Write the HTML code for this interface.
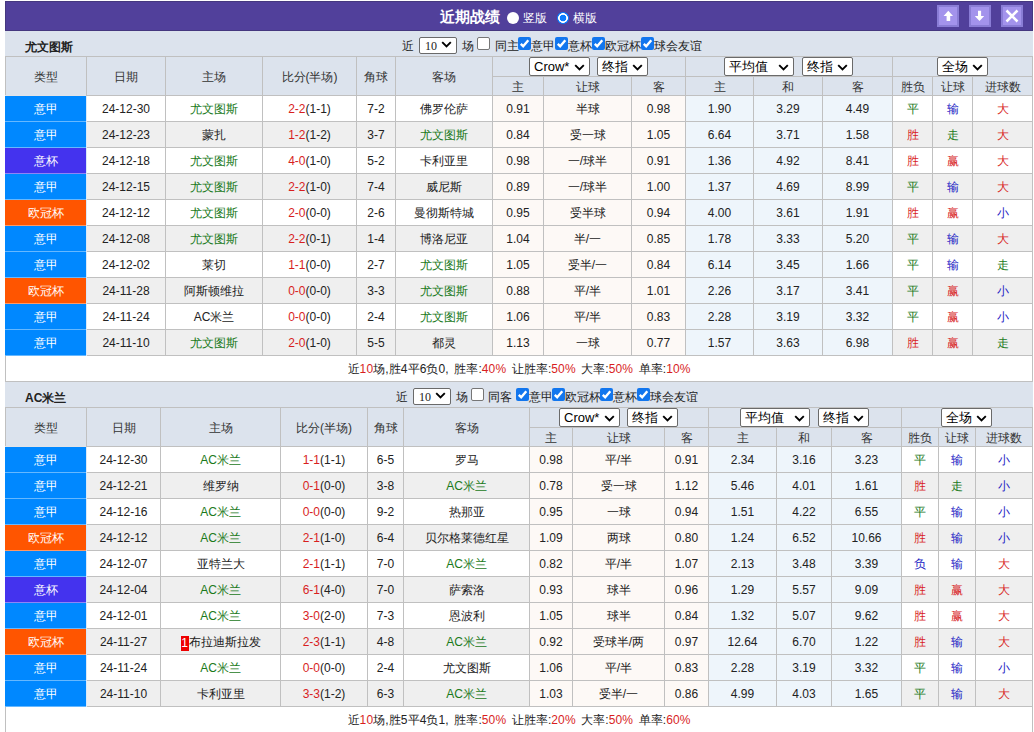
<!DOCTYPE html><html><head><meta charset="utf-8"><style>
*{margin:0;padding:0;box-sizing:content-box}
html,body{width:1034px;height:732px;overflow:hidden;background:#fff}
body{position:relative;font-family:"Liberation Sans",sans-serif;font-size:12px;color:#222}
.a{position:absolute}
.t{position:absolute;white-space:nowrap;font-size:12px;color:#222}
.b{font-weight:bold}
.c{position:absolute;text-align:center;white-space:nowrap;overflow:hidden;font-size:12px;color:#222}
.w{color:#fff}
.sel{position:absolute;background:#fff;border:1px solid #6a6a6a;border-radius:2px;box-sizing:content-box}
.st{position:absolute;left:4px;top:0;line-height:17px;font-size:13px;color:#000}
.cb{position:absolute;width:11px;height:11px;border:1px solid #767676;border-radius:2px;background:#fff}
.cb.on{width:13px;height:13px;border:0;background:#1276ee}
.cb svg{position:absolute;left:0;top:0}
.rk{display:inline-block;background:#e00;color:#fff;width:8px;line-height:15px;font-size:12px;vertical-align:-1px}
</style></head><body><div class="a" style="left:5px;top:1px;width:1026px;height:28px;background:#51409b;border:1px solid #45387f"></div><div class="t b" style="left:440px;top:2px;height:30px;line-height:30px;font-size:15px;color:#fff">近期战绩</div><div class="a" style="left:506.5px;top:11.5px;width:12px;height:12px;border-radius:50%;background:#fff"></div><div class="t" style="left:523px;top:3px;line-height:30px;color:#fff">竖版</div><div class="a" style="left:556.5px;top:11.5px;width:12px;height:12px;border-radius:50%;background:radial-gradient(circle,#0a7dff 0,#0a7dff 3.1px,#fff 3.6px,#fff 4.6px,#0a7dff 5.1px)"></div><div class="t" style="left:573px;top:3px;line-height:30px;color:#fff">横版</div><div class="a" style="left:937px;top:5px;width:18px;height:18px;background:#a393ec;border:2px solid #8a7dd6"><svg width="18" height="18" viewBox="0 0 18 18"><path d="M9.3 3.8 L14 9 L11.2 9 L11.2 14 L7.6 14 L7.6 9 L4.6 9 Z" fill="#fff"/></svg></div><div class="a" style="left:969px;top:5px;width:18px;height:18px;background:#a393ec;border:2px solid #8a7dd6"><svg width="18" height="18" viewBox="0 0 18 18"><path d="M8.5 14 L13.2 9 L10.1 9 L10.1 3.8 L7 3.8 L7 9 L3.8 9 Z" fill="#fff"/></svg></div><div class="a" style="left:1001px;top:5px;width:18px;height:18px;background:#a393ec;border:2px solid #8a7dd6"><svg width="18" height="18" viewBox="0 0 18 18"><path d="M3.5 3.5 L14.5 14.5 M14.5 3.5 L3.5 14.5" stroke="#fff" stroke-width="2.5" fill="none"/></svg></div><div class="a" style="left:5px;top:31px;width:1028px;height:25px;background:#dce3ed;"></div><div class="t b" style="left:25px;top:35px;height:25px;line-height:25px">尤文图斯</div><div class="t" style="left:402px;top:34px;line-height:25px">近</div><div class="sel" style="left:419px;top:37px;width:36px;height:15px"><span style="font-family:'Liberation Serif',serif;font-size:12px;left:5px;top:1px;line-height:15px;position:absolute">10</span><svg style="position:absolute;left:21px;top:3px" width="11" height="7" viewBox="0 0 11 7"><path d="M1.2 1.2 L5.5 5.5 L9.8 1.2" fill="none" stroke="#000" stroke-width="1.9"/></svg></div><div class="t" style="left:462px;top:34px;line-height:25px">场</div><div class="cb" style="left:477px;top:37px"></div><div class="t" style="left:495px;top:34px;line-height:25px">同主</div><div class="cb on" style="left:518px;top:37px"><svg width="13" height="13" viewBox="0 0 13 13"><path d="M2.8 6.8 L5.2 9.3 L10.3 3.3" fill="none" stroke="#fff" stroke-width="2.4" stroke-linecap="butt" stroke-linejoin="miter"/></svg></div><div class="t" style="left:531px;top:34px;line-height:25px">意甲</div><div class="cb on" style="left:555px;top:37px"><svg width="13" height="13" viewBox="0 0 13 13"><path d="M2.8 6.8 L5.2 9.3 L10.3 3.3" fill="none" stroke="#fff" stroke-width="2.4" stroke-linecap="butt" stroke-linejoin="miter"/></svg></div><div class="t" style="left:568px;top:34px;line-height:25px">意杯</div><div class="cb on" style="left:592px;top:37px"><svg width="13" height="13" viewBox="0 0 13 13"><path d="M2.8 6.8 L5.2 9.3 L10.3 3.3" fill="none" stroke="#fff" stroke-width="2.4" stroke-linecap="butt" stroke-linejoin="miter"/></svg></div><div class="t" style="left:605px;top:34px;line-height:25px">欧冠杯</div><div class="cb on" style="left:641px;top:37px"><svg width="13" height="13" viewBox="0 0 13 13"><path d="M2.8 6.8 L5.2 9.3 L10.3 3.3" fill="none" stroke="#fff" stroke-width="2.4" stroke-linecap="butt" stroke-linejoin="miter"/></svg></div><div class="t" style="left:654px;top:34px;line-height:25px">球会友谊</div><div class="a" style="left:5px;top:56px;width:1028px;height:326px;background:#c0c0c0;"></div><div class="c" style="left:6px;top:57px;width:80px;height:37px;padding-top:1px;line-height:38px;background:#dce3ed;color:#333;">类型</div><div class="c" style="left:87px;top:57px;width:78px;height:37px;padding-top:1px;line-height:38px;background:#dce3ed;color:#333;">日期</div><div class="c" style="left:166px;top:57px;width:96px;height:37px;padding-top:1px;line-height:38px;background:#dce3ed;color:#333;">主场</div><div class="c" style="left:263px;top:57px;width:93px;height:37px;padding-top:1px;line-height:38px;background:#dce3ed;color:#333;">比分(半场)</div><div class="c" style="left:357px;top:57px;width:38px;height:37px;padding-top:1px;line-height:38px;background:#dce3ed;color:#333;">角球</div><div class="c" style="left:396px;top:57px;width:96px;height:37px;padding-top:1px;line-height:38px;background:#dce3ed;color:#333;">客场</div><div class="c" style="left:493px;top:57px;width:192px;height:18px;padding-top:1px;line-height:19px;background:#dce3ed;"></div><div class="c" style="left:686px;top:57px;width:206px;height:18px;padding-top:1px;line-height:19px;background:#dce3ed;"></div><div class="c" style="left:893px;top:57px;width:139px;height:18px;padding-top:1px;line-height:19px;background:#dce3ed;"></div><div class="c" style="left:493px;top:77px;width:50px;height:17px;padding-top:1px;line-height:18px;background:#dce3ed;color:#333;">主</div><div class="c" style="left:544px;top:77px;width:87px;height:17px;padding-top:1px;line-height:18px;background:#dce3ed;color:#333;">让球</div><div class="c" style="left:632px;top:77px;width:53px;height:17px;padding-top:1px;line-height:18px;background:#dce3ed;color:#333;">客</div><div class="c" style="left:686px;top:77px;width:67px;height:17px;padding-top:1px;line-height:18px;background:#dce3ed;color:#333;">主</div><div class="c" style="left:754px;top:77px;width:68px;height:17px;padding-top:1px;line-height:18px;background:#dce3ed;color:#333;">和</div><div class="c" style="left:823px;top:77px;width:69px;height:17px;padding-top:1px;line-height:18px;background:#dce3ed;color:#333;">客</div><div class="c" style="left:893px;top:77px;width:39px;height:17px;padding-top:1px;line-height:18px;background:#dce3ed;color:#333;">胜负</div><div class="c" style="left:933px;top:77px;width:39px;height:17px;padding-top:1px;line-height:18px;background:#dce3ed;color:#333;">让球</div><div class="c" style="left:973px;top:77px;width:59px;height:17px;padding-top:1px;line-height:18px;background:#dce3ed;color:#333;">进球数</div><div class="sel" style="left:529px;top:57px;width:59px;height:17px"><span class="st">Crow*</span><svg style="position:absolute;left:44px;top:6px" width="11" height="7" viewBox="0 0 11 7"><path d="M1.2 1.2 L5.5 5.5 L9.8 1.2" fill="none" stroke="#000" stroke-width="1.9"/></svg></div><div class="sel" style="left:597px;top:57px;width:49px;height:17px"><span class="st">终指</span><svg style="position:absolute;left:34px;top:6px" width="11" height="7" viewBox="0 0 11 7"><path d="M1.2 1.2 L5.5 5.5 L9.8 1.2" fill="none" stroke="#000" stroke-width="1.9"/></svg></div><div class="sel" style="left:724px;top:57px;width:68px;height:17px"><span class="st">平均值</span><svg style="position:absolute;left:53px;top:6px" width="11" height="7" viewBox="0 0 11 7"><path d="M1.2 1.2 L5.5 5.5 L9.8 1.2" fill="none" stroke="#000" stroke-width="1.9"/></svg></div><div class="sel" style="left:802px;top:57px;width:49px;height:17px"><span class="st">终指</span><svg style="position:absolute;left:34px;top:6px" width="11" height="7" viewBox="0 0 11 7"><path d="M1.2 1.2 L5.5 5.5 L9.8 1.2" fill="none" stroke="#000" stroke-width="1.9"/></svg></div><div class="sel" style="left:937px;top:57px;width:49px;height:17px"><span class="st">全场</span><svg style="position:absolute;left:34px;top:6px" width="11" height="7" viewBox="0 0 11 7"><path d="M1.2 1.2 L5.5 5.5 L9.8 1.2" fill="none" stroke="#000" stroke-width="1.9"/></svg></div><div class="c w" style="left:5px;top:96px;width:81px;height:24px;padding-top:1px;line-height:25px;background:#0088ff">意甲</div><div class="a" style="left:5px;top:121px;width:81px;height:1px;background:#66b8ff;"></div><div class="a" style="left:86px;top:96px;width:1px;height:26px;background:#d9e9f9;"></div><div class="a" style="left:5px;top:95px;width:81px;height:1px;background:#e2e4e8;"></div><div class="c" style="left:87px;top:96px;width:78px;height:24px;padding-top:1px;line-height:25px;background:#ffffff;">24-12-30</div><div class="c" style="left:166px;top:96px;width:96px;height:24px;padding-top:1px;line-height:25px;background:#ffffff;"><span style="color:#1a7a1a">尤文图斯</span></div><div class="c" style="left:263px;top:96px;width:93px;height:24px;padding-top:1px;line-height:25px;background:#ffffff;"><span style="color:#d81e1e">2-2</span>(1-1)</div><div class="c" style="left:357px;top:96px;width:38px;height:24px;padding-top:1px;line-height:25px;background:#ffffff;">7-2</div><div class="c" style="left:396px;top:96px;width:96px;height:24px;padding-top:1px;line-height:25px;background:#ffffff;">佛罗伦萨</div><div class="c" style="left:493px;top:96px;width:50px;height:24px;padding-top:1px;line-height:25px;background:#fdf9f6;">0.91</div><div class="c" style="left:544px;top:96px;width:87px;height:24px;padding-top:1px;line-height:25px;background:#fdf9f6;">半球</div><div class="c" style="left:632px;top:96px;width:53px;height:24px;padding-top:1px;line-height:25px;background:#fdf9f6;">0.98</div><div class="c" style="left:686px;top:96px;width:67px;height:24px;padding-top:1px;line-height:25px;background:#eef5fb;">1.90</div><div class="c" style="left:754px;top:96px;width:68px;height:24px;padding-top:1px;line-height:25px;background:#eef5fb;">3.29</div><div class="c" style="left:823px;top:96px;width:69px;height:24px;padding-top:1px;line-height:25px;background:#eef5fb;">4.49</div><div class="c" style="left:893px;top:96px;width:39px;height:24px;padding-top:1px;line-height:25px;background:#ffffff;color:#1a7a1a;">平</div><div class="c" style="left:933px;top:96px;width:39px;height:24px;padding-top:1px;line-height:25px;background:#ffffff;color:#2222c4;">输</div><div class="c" style="left:973px;top:96px;width:59px;height:24px;padding-top:1px;line-height:25px;background:#ffffff;color:#d81e1e;">大</div><div class="c w" style="left:5px;top:122px;width:81px;height:24px;padding-top:1px;line-height:25px;background:#0088ff">意甲</div><div class="a" style="left:5px;top:147px;width:81px;height:1px;background:#66b8ff;"></div><div class="a" style="left:86px;top:122px;width:1px;height:26px;background:#d9e9f9;"></div><div class="c" style="left:87px;top:122px;width:78px;height:24px;padding-top:1px;line-height:25px;background:#efefef;">24-12-23</div><div class="c" style="left:166px;top:122px;width:96px;height:24px;padding-top:1px;line-height:25px;background:#efefef;">蒙扎</div><div class="c" style="left:263px;top:122px;width:93px;height:24px;padding-top:1px;line-height:25px;background:#efefef;"><span style="color:#d81e1e">1-2</span>(1-2)</div><div class="c" style="left:357px;top:122px;width:38px;height:24px;padding-top:1px;line-height:25px;background:#efefef;">3-7</div><div class="c" style="left:396px;top:122px;width:96px;height:24px;padding-top:1px;line-height:25px;background:#efefef;"><span style="color:#1a7a1a">尤文图斯</span></div><div class="c" style="left:493px;top:122px;width:50px;height:24px;padding-top:1px;line-height:25px;background:#fdf9f6;">0.84</div><div class="c" style="left:544px;top:122px;width:87px;height:24px;padding-top:1px;line-height:25px;background:#fdf9f6;">受一球</div><div class="c" style="left:632px;top:122px;width:53px;height:24px;padding-top:1px;line-height:25px;background:#fdf9f6;">1.05</div><div class="c" style="left:686px;top:122px;width:67px;height:24px;padding-top:1px;line-height:25px;background:#eef5fb;">6.64</div><div class="c" style="left:754px;top:122px;width:68px;height:24px;padding-top:1px;line-height:25px;background:#eef5fb;">3.71</div><div class="c" style="left:823px;top:122px;width:69px;height:24px;padding-top:1px;line-height:25px;background:#eef5fb;">1.58</div><div class="c" style="left:893px;top:122px;width:39px;height:24px;padding-top:1px;line-height:25px;background:#efefef;color:#d81e1e;">胜</div><div class="c" style="left:933px;top:122px;width:39px;height:24px;padding-top:1px;line-height:25px;background:#efefef;color:#1a7a1a;">走</div><div class="c" style="left:973px;top:122px;width:59px;height:24px;padding-top:1px;line-height:25px;background:#efefef;color:#d81e1e;">大</div><div class="c w" style="left:5px;top:148px;width:81px;height:24px;padding-top:1px;line-height:25px;background:#4433ee">意杯</div><div class="a" style="left:5px;top:173px;width:81px;height:1px;background:#8f85f5;"></div><div class="a" style="left:86px;top:148px;width:1px;height:26px;background:#d9e9f9;"></div><div class="c" style="left:87px;top:148px;width:78px;height:24px;padding-top:1px;line-height:25px;background:#ffffff;">24-12-18</div><div class="c" style="left:166px;top:148px;width:96px;height:24px;padding-top:1px;line-height:25px;background:#ffffff;"><span style="color:#1a7a1a">尤文图斯</span></div><div class="c" style="left:263px;top:148px;width:93px;height:24px;padding-top:1px;line-height:25px;background:#ffffff;"><span style="color:#d81e1e">4-0</span>(1-0)</div><div class="c" style="left:357px;top:148px;width:38px;height:24px;padding-top:1px;line-height:25px;background:#ffffff;">5-2</div><div class="c" style="left:396px;top:148px;width:96px;height:24px;padding-top:1px;line-height:25px;background:#ffffff;">卡利亚里</div><div class="c" style="left:493px;top:148px;width:50px;height:24px;padding-top:1px;line-height:25px;background:#fdf9f6;">0.98</div><div class="c" style="left:544px;top:148px;width:87px;height:24px;padding-top:1px;line-height:25px;background:#fdf9f6;">一/球半</div><div class="c" style="left:632px;top:148px;width:53px;height:24px;padding-top:1px;line-height:25px;background:#fdf9f6;">0.91</div><div class="c" style="left:686px;top:148px;width:67px;height:24px;padding-top:1px;line-height:25px;background:#eef5fb;">1.36</div><div class="c" style="left:754px;top:148px;width:68px;height:24px;padding-top:1px;line-height:25px;background:#eef5fb;">4.92</div><div class="c" style="left:823px;top:148px;width:69px;height:24px;padding-top:1px;line-height:25px;background:#eef5fb;">8.41</div><div class="c" style="left:893px;top:148px;width:39px;height:24px;padding-top:1px;line-height:25px;background:#ffffff;color:#d81e1e;">胜</div><div class="c" style="left:933px;top:148px;width:39px;height:24px;padding-top:1px;line-height:25px;background:#ffffff;color:#d81e1e;">赢</div><div class="c" style="left:973px;top:148px;width:59px;height:24px;padding-top:1px;line-height:25px;background:#ffffff;color:#d81e1e;">大</div><div class="c w" style="left:5px;top:174px;width:81px;height:24px;padding-top:1px;line-height:25px;background:#0088ff">意甲</div><div class="a" style="left:5px;top:199px;width:81px;height:1px;background:#66b8ff;"></div><div class="a" style="left:86px;top:174px;width:1px;height:26px;background:#d9e9f9;"></div><div class="c" style="left:87px;top:174px;width:78px;height:24px;padding-top:1px;line-height:25px;background:#efefef;">24-12-15</div><div class="c" style="left:166px;top:174px;width:96px;height:24px;padding-top:1px;line-height:25px;background:#efefef;"><span style="color:#1a7a1a">尤文图斯</span></div><div class="c" style="left:263px;top:174px;width:93px;height:24px;padding-top:1px;line-height:25px;background:#efefef;"><span style="color:#d81e1e">2-2</span>(1-0)</div><div class="c" style="left:357px;top:174px;width:38px;height:24px;padding-top:1px;line-height:25px;background:#efefef;">7-4</div><div class="c" style="left:396px;top:174px;width:96px;height:24px;padding-top:1px;line-height:25px;background:#efefef;">威尼斯</div><div class="c" style="left:493px;top:174px;width:50px;height:24px;padding-top:1px;line-height:25px;background:#fdf9f6;">0.89</div><div class="c" style="left:544px;top:174px;width:87px;height:24px;padding-top:1px;line-height:25px;background:#fdf9f6;">一/球半</div><div class="c" style="left:632px;top:174px;width:53px;height:24px;padding-top:1px;line-height:25px;background:#fdf9f6;">1.00</div><div class="c" style="left:686px;top:174px;width:67px;height:24px;padding-top:1px;line-height:25px;background:#eef5fb;">1.37</div><div class="c" style="left:754px;top:174px;width:68px;height:24px;padding-top:1px;line-height:25px;background:#eef5fb;">4.69</div><div class="c" style="left:823px;top:174px;width:69px;height:24px;padding-top:1px;line-height:25px;background:#eef5fb;">8.99</div><div class="c" style="left:893px;top:174px;width:39px;height:24px;padding-top:1px;line-height:25px;background:#efefef;color:#1a7a1a;">平</div><div class="c" style="left:933px;top:174px;width:39px;height:24px;padding-top:1px;line-height:25px;background:#efefef;color:#2222c4;">输</div><div class="c" style="left:973px;top:174px;width:59px;height:24px;padding-top:1px;line-height:25px;background:#efefef;color:#d81e1e;">大</div><div class="c w" style="left:5px;top:200px;width:81px;height:24px;padding-top:1px;line-height:25px;background:#ff5500">欧冠杯</div><div class="a" style="left:5px;top:225px;width:81px;height:1px;background:#ff9966;"></div><div class="a" style="left:86px;top:200px;width:1px;height:26px;background:#d9e9f9;"></div><div class="c" style="left:87px;top:200px;width:78px;height:24px;padding-top:1px;line-height:25px;background:#ffffff;">24-12-12</div><div class="c" style="left:166px;top:200px;width:96px;height:24px;padding-top:1px;line-height:25px;background:#ffffff;"><span style="color:#1a7a1a">尤文图斯</span></div><div class="c" style="left:263px;top:200px;width:93px;height:24px;padding-top:1px;line-height:25px;background:#ffffff;"><span style="color:#d81e1e">2-0</span>(0-0)</div><div class="c" style="left:357px;top:200px;width:38px;height:24px;padding-top:1px;line-height:25px;background:#ffffff;">2-6</div><div class="c" style="left:396px;top:200px;width:96px;height:24px;padding-top:1px;line-height:25px;background:#ffffff;">曼彻斯特城</div><div class="c" style="left:493px;top:200px;width:50px;height:24px;padding-top:1px;line-height:25px;background:#fdf9f6;">0.95</div><div class="c" style="left:544px;top:200px;width:87px;height:24px;padding-top:1px;line-height:25px;background:#fdf9f6;">受半球</div><div class="c" style="left:632px;top:200px;width:53px;height:24px;padding-top:1px;line-height:25px;background:#fdf9f6;">0.94</div><div class="c" style="left:686px;top:200px;width:67px;height:24px;padding-top:1px;line-height:25px;background:#eef5fb;">4.00</div><div class="c" style="left:754px;top:200px;width:68px;height:24px;padding-top:1px;line-height:25px;background:#eef5fb;">3.61</div><div class="c" style="left:823px;top:200px;width:69px;height:24px;padding-top:1px;line-height:25px;background:#eef5fb;">1.91</div><div class="c" style="left:893px;top:200px;width:39px;height:24px;padding-top:1px;line-height:25px;background:#ffffff;color:#d81e1e;">胜</div><div class="c" style="left:933px;top:200px;width:39px;height:24px;padding-top:1px;line-height:25px;background:#ffffff;color:#d81e1e;">赢</div><div class="c" style="left:973px;top:200px;width:59px;height:24px;padding-top:1px;line-height:25px;background:#ffffff;color:#2222c4;">小</div><div class="c w" style="left:5px;top:226px;width:81px;height:24px;padding-top:1px;line-height:25px;background:#0088ff">意甲</div><div class="a" style="left:5px;top:251px;width:81px;height:1px;background:#66b8ff;"></div><div class="a" style="left:86px;top:226px;width:1px;height:26px;background:#d9e9f9;"></div><div class="c" style="left:87px;top:226px;width:78px;height:24px;padding-top:1px;line-height:25px;background:#efefef;">24-12-08</div><div class="c" style="left:166px;top:226px;width:96px;height:24px;padding-top:1px;line-height:25px;background:#efefef;"><span style="color:#1a7a1a">尤文图斯</span></div><div class="c" style="left:263px;top:226px;width:93px;height:24px;padding-top:1px;line-height:25px;background:#efefef;"><span style="color:#d81e1e">2-2</span>(0-1)</div><div class="c" style="left:357px;top:226px;width:38px;height:24px;padding-top:1px;line-height:25px;background:#efefef;">1-4</div><div class="c" style="left:396px;top:226px;width:96px;height:24px;padding-top:1px;line-height:25px;background:#efefef;">博洛尼亚</div><div class="c" style="left:493px;top:226px;width:50px;height:24px;padding-top:1px;line-height:25px;background:#fdf9f6;">1.04</div><div class="c" style="left:544px;top:226px;width:87px;height:24px;padding-top:1px;line-height:25px;background:#fdf9f6;">半/一</div><div class="c" style="left:632px;top:226px;width:53px;height:24px;padding-top:1px;line-height:25px;background:#fdf9f6;">0.85</div><div class="c" style="left:686px;top:226px;width:67px;height:24px;padding-top:1px;line-height:25px;background:#eef5fb;">1.78</div><div class="c" style="left:754px;top:226px;width:68px;height:24px;padding-top:1px;line-height:25px;background:#eef5fb;">3.33</div><div class="c" style="left:823px;top:226px;width:69px;height:24px;padding-top:1px;line-height:25px;background:#eef5fb;">5.20</div><div class="c" style="left:893px;top:226px;width:39px;height:24px;padding-top:1px;line-height:25px;background:#efefef;color:#1a7a1a;">平</div><div class="c" style="left:933px;top:226px;width:39px;height:24px;padding-top:1px;line-height:25px;background:#efefef;color:#2222c4;">输</div><div class="c" style="left:973px;top:226px;width:59px;height:24px;padding-top:1px;line-height:25px;background:#efefef;color:#d81e1e;">大</div><div class="c w" style="left:5px;top:252px;width:81px;height:24px;padding-top:1px;line-height:25px;background:#0088ff">意甲</div><div class="a" style="left:5px;top:277px;width:81px;height:1px;background:#66b8ff;"></div><div class="a" style="left:86px;top:252px;width:1px;height:26px;background:#d9e9f9;"></div><div class="c" style="left:87px;top:252px;width:78px;height:24px;padding-top:1px;line-height:25px;background:#ffffff;">24-12-02</div><div class="c" style="left:166px;top:252px;width:96px;height:24px;padding-top:1px;line-height:25px;background:#ffffff;">莱切</div><div class="c" style="left:263px;top:252px;width:93px;height:24px;padding-top:1px;line-height:25px;background:#ffffff;"><span style="color:#d81e1e">1-1</span>(0-0)</div><div class="c" style="left:357px;top:252px;width:38px;height:24px;padding-top:1px;line-height:25px;background:#ffffff;">2-7</div><div class="c" style="left:396px;top:252px;width:96px;height:24px;padding-top:1px;line-height:25px;background:#ffffff;"><span style="color:#1a7a1a">尤文图斯</span></div><div class="c" style="left:493px;top:252px;width:50px;height:24px;padding-top:1px;line-height:25px;background:#fdf9f6;">1.05</div><div class="c" style="left:544px;top:252px;width:87px;height:24px;padding-top:1px;line-height:25px;background:#fdf9f6;">受半/一</div><div class="c" style="left:632px;top:252px;width:53px;height:24px;padding-top:1px;line-height:25px;background:#fdf9f6;">0.84</div><div class="c" style="left:686px;top:252px;width:67px;height:24px;padding-top:1px;line-height:25px;background:#eef5fb;">6.14</div><div class="c" style="left:754px;top:252px;width:68px;height:24px;padding-top:1px;line-height:25px;background:#eef5fb;">3.45</div><div class="c" style="left:823px;top:252px;width:69px;height:24px;padding-top:1px;line-height:25px;background:#eef5fb;">1.66</div><div class="c" style="left:893px;top:252px;width:39px;height:24px;padding-top:1px;line-height:25px;background:#ffffff;color:#1a7a1a;">平</div><div class="c" style="left:933px;top:252px;width:39px;height:24px;padding-top:1px;line-height:25px;background:#ffffff;color:#2222c4;">输</div><div class="c" style="left:973px;top:252px;width:59px;height:24px;padding-top:1px;line-height:25px;background:#ffffff;color:#1a7a1a;">走</div><div class="c w" style="left:5px;top:278px;width:81px;height:24px;padding-top:1px;line-height:25px;background:#ff5500">欧冠杯</div><div class="a" style="left:5px;top:303px;width:81px;height:1px;background:#ff9966;"></div><div class="a" style="left:86px;top:278px;width:1px;height:26px;background:#d9e9f9;"></div><div class="c" style="left:87px;top:278px;width:78px;height:24px;padding-top:1px;line-height:25px;background:#efefef;">24-11-28</div><div class="c" style="left:166px;top:278px;width:96px;height:24px;padding-top:1px;line-height:25px;background:#efefef;">阿斯顿维拉</div><div class="c" style="left:263px;top:278px;width:93px;height:24px;padding-top:1px;line-height:25px;background:#efefef;"><span style="color:#d81e1e">0-0</span>(0-0)</div><div class="c" style="left:357px;top:278px;width:38px;height:24px;padding-top:1px;line-height:25px;background:#efefef;">3-3</div><div class="c" style="left:396px;top:278px;width:96px;height:24px;padding-top:1px;line-height:25px;background:#efefef;"><span style="color:#1a7a1a">尤文图斯</span></div><div class="c" style="left:493px;top:278px;width:50px;height:24px;padding-top:1px;line-height:25px;background:#fdf9f6;">0.88</div><div class="c" style="left:544px;top:278px;width:87px;height:24px;padding-top:1px;line-height:25px;background:#fdf9f6;">平/半</div><div class="c" style="left:632px;top:278px;width:53px;height:24px;padding-top:1px;line-height:25px;background:#fdf9f6;">1.01</div><div class="c" style="left:686px;top:278px;width:67px;height:24px;padding-top:1px;line-height:25px;background:#eef5fb;">2.26</div><div class="c" style="left:754px;top:278px;width:68px;height:24px;padding-top:1px;line-height:25px;background:#eef5fb;">3.17</div><div class="c" style="left:823px;top:278px;width:69px;height:24px;padding-top:1px;line-height:25px;background:#eef5fb;">3.41</div><div class="c" style="left:893px;top:278px;width:39px;height:24px;padding-top:1px;line-height:25px;background:#efefef;color:#1a7a1a;">平</div><div class="c" style="left:933px;top:278px;width:39px;height:24px;padding-top:1px;line-height:25px;background:#efefef;color:#d81e1e;">赢</div><div class="c" style="left:973px;top:278px;width:59px;height:24px;padding-top:1px;line-height:25px;background:#efefef;color:#2222c4;">小</div><div class="c w" style="left:5px;top:304px;width:81px;height:24px;padding-top:1px;line-height:25px;background:#0088ff">意甲</div><div class="a" style="left:5px;top:329px;width:81px;height:1px;background:#66b8ff;"></div><div class="a" style="left:86px;top:304px;width:1px;height:26px;background:#d9e9f9;"></div><div class="c" style="left:87px;top:304px;width:78px;height:24px;padding-top:1px;line-height:25px;background:#ffffff;">24-11-24</div><div class="c" style="left:166px;top:304px;width:96px;height:24px;padding-top:1px;line-height:25px;background:#ffffff;">AC米兰</div><div class="c" style="left:263px;top:304px;width:93px;height:24px;padding-top:1px;line-height:25px;background:#ffffff;"><span style="color:#d81e1e">0-0</span>(0-0)</div><div class="c" style="left:357px;top:304px;width:38px;height:24px;padding-top:1px;line-height:25px;background:#ffffff;">2-4</div><div class="c" style="left:396px;top:304px;width:96px;height:24px;padding-top:1px;line-height:25px;background:#ffffff;"><span style="color:#1a7a1a">尤文图斯</span></div><div class="c" style="left:493px;top:304px;width:50px;height:24px;padding-top:1px;line-height:25px;background:#fdf9f6;">1.06</div><div class="c" style="left:544px;top:304px;width:87px;height:24px;padding-top:1px;line-height:25px;background:#fdf9f6;">平/半</div><div class="c" style="left:632px;top:304px;width:53px;height:24px;padding-top:1px;line-height:25px;background:#fdf9f6;">0.83</div><div class="c" style="left:686px;top:304px;width:67px;height:24px;padding-top:1px;line-height:25px;background:#eef5fb;">2.28</div><div class="c" style="left:754px;top:304px;width:68px;height:24px;padding-top:1px;line-height:25px;background:#eef5fb;">3.19</div><div class="c" style="left:823px;top:304px;width:69px;height:24px;padding-top:1px;line-height:25px;background:#eef5fb;">3.32</div><div class="c" style="left:893px;top:304px;width:39px;height:24px;padding-top:1px;line-height:25px;background:#ffffff;color:#1a7a1a;">平</div><div class="c" style="left:933px;top:304px;width:39px;height:24px;padding-top:1px;line-height:25px;background:#ffffff;color:#d81e1e;">赢</div><div class="c" style="left:973px;top:304px;width:59px;height:24px;padding-top:1px;line-height:25px;background:#ffffff;color:#2222c4;">小</div><div class="c w" style="left:5px;top:330px;width:81px;height:24px;padding-top:1px;line-height:25px;background:#0088ff">意甲</div><div class="a" style="left:5px;top:355px;width:81px;height:1px;background:#66b8ff;"></div><div class="a" style="left:86px;top:330px;width:1px;height:26px;background:#d9e9f9;"></div><div class="c" style="left:87px;top:330px;width:78px;height:24px;padding-top:1px;line-height:25px;background:#efefef;">24-11-10</div><div class="c" style="left:166px;top:330px;width:96px;height:24px;padding-top:1px;line-height:25px;background:#efefef;"><span style="color:#1a7a1a">尤文图斯</span></div><div class="c" style="left:263px;top:330px;width:93px;height:24px;padding-top:1px;line-height:25px;background:#efefef;"><span style="color:#d81e1e">2-0</span>(1-0)</div><div class="c" style="left:357px;top:330px;width:38px;height:24px;padding-top:1px;line-height:25px;background:#efefef;">5-5</div><div class="c" style="left:396px;top:330px;width:96px;height:24px;padding-top:1px;line-height:25px;background:#efefef;">都灵</div><div class="c" style="left:493px;top:330px;width:50px;height:24px;padding-top:1px;line-height:25px;background:#fdf9f6;">1.13</div><div class="c" style="left:544px;top:330px;width:87px;height:24px;padding-top:1px;line-height:25px;background:#fdf9f6;">一球</div><div class="c" style="left:632px;top:330px;width:53px;height:24px;padding-top:1px;line-height:25px;background:#fdf9f6;">0.77</div><div class="c" style="left:686px;top:330px;width:67px;height:24px;padding-top:1px;line-height:25px;background:#eef5fb;">1.57</div><div class="c" style="left:754px;top:330px;width:68px;height:24px;padding-top:1px;line-height:25px;background:#eef5fb;">3.63</div><div class="c" style="left:823px;top:330px;width:69px;height:24px;padding-top:1px;line-height:25px;background:#eef5fb;">6.98</div><div class="c" style="left:893px;top:330px;width:39px;height:24px;padding-top:1px;line-height:25px;background:#efefef;color:#d81e1e;">胜</div><div class="c" style="left:933px;top:330px;width:39px;height:24px;padding-top:1px;line-height:25px;background:#efefef;color:#d81e1e;">赢</div><div class="c" style="left:973px;top:330px;width:59px;height:24px;padding-top:1px;line-height:25px;background:#efefef;color:#1a7a1a;">走</div><div class="c" style="left:6px;top:356px;width:1026px;height:24px;padding-top:1px;line-height:25px;background:#ffffff;word-spacing:2px;letter-spacing:0.1px">近<span style="color:#d81e1e">10</span>场,胜4平6负0, 胜率:<span style="color:#d81e1e">40%</span> 让胜率:<span style="color:#d81e1e">50%</span> 大率:<span style="color:#d81e1e">50%</span> 单率:<span style="color:#d81e1e">10%</span></div><div class="a" style="left:5px;top:382px;width:1028px;height:25px;background:#dce3ed;"></div><div class="t b" style="left:25px;top:386px;height:25px;line-height:25px">AC米兰</div><div class="t" style="left:396px;top:385px;line-height:25px">近</div><div class="sel" style="left:413px;top:388px;width:36px;height:15px"><span style="font-family:'Liberation Serif',serif;font-size:12px;left:5px;top:1px;line-height:15px;position:absolute">10</span><svg style="position:absolute;left:21px;top:3px" width="11" height="7" viewBox="0 0 11 7"><path d="M1.2 1.2 L5.5 5.5 L9.8 1.2" fill="none" stroke="#000" stroke-width="1.9"/></svg></div><div class="t" style="left:456px;top:385px;line-height:25px">场</div><div class="cb" style="left:471px;top:388px"></div><div class="t" style="left:488px;top:385px;line-height:25px">同客</div><div class="cb on" style="left:516px;top:388px"><svg width="13" height="13" viewBox="0 0 13 13"><path d="M2.8 6.8 L5.2 9.3 L10.3 3.3" fill="none" stroke="#fff" stroke-width="2.4" stroke-linecap="butt" stroke-linejoin="miter"/></svg></div><div class="t" style="left:529px;top:385px;line-height:25px">意甲</div><div class="cb on" style="left:552px;top:388px"><svg width="13" height="13" viewBox="0 0 13 13"><path d="M2.8 6.8 L5.2 9.3 L10.3 3.3" fill="none" stroke="#fff" stroke-width="2.4" stroke-linecap="butt" stroke-linejoin="miter"/></svg></div><div class="t" style="left:565px;top:385px;line-height:25px">欧冠杯</div><div class="cb on" style="left:600px;top:388px"><svg width="13" height="13" viewBox="0 0 13 13"><path d="M2.8 6.8 L5.2 9.3 L10.3 3.3" fill="none" stroke="#fff" stroke-width="2.4" stroke-linecap="butt" stroke-linejoin="miter"/></svg></div><div class="t" style="left:613px;top:385px;line-height:25px">意杯</div><div class="cb on" style="left:637px;top:388px"><svg width="13" height="13" viewBox="0 0 13 13"><path d="M2.8 6.8 L5.2 9.3 L10.3 3.3" fill="none" stroke="#fff" stroke-width="2.4" stroke-linecap="butt" stroke-linejoin="miter"/></svg></div><div class="t" style="left:650px;top:385px;line-height:25px">球会友谊</div><div class="a" style="left:5px;top:407px;width:1028px;height:326px;background:#c0c0c0;"></div><div class="c" style="left:6px;top:408px;width:80px;height:37px;padding-top:1px;line-height:38px;background:#dce3ed;color:#333;">类型</div><div class="c" style="left:87px;top:408px;width:73px;height:37px;padding-top:1px;line-height:38px;background:#dce3ed;color:#333;">日期</div><div class="c" style="left:161px;top:408px;width:119px;height:37px;padding-top:1px;line-height:38px;background:#dce3ed;color:#333;">主场</div><div class="c" style="left:281px;top:408px;width:86px;height:37px;padding-top:1px;line-height:38px;background:#dce3ed;color:#333;">比分(半场)</div><div class="c" style="left:368px;top:408px;width:35px;height:37px;padding-top:1px;line-height:38px;background:#dce3ed;color:#333;">角球</div><div class="c" style="left:404px;top:408px;width:125px;height:37px;padding-top:1px;line-height:38px;background:#dce3ed;color:#333;">客场</div><div class="c" style="left:530px;top:408px;width:178px;height:18px;padding-top:1px;line-height:19px;background:#dce3ed;"></div><div class="c" style="left:709px;top:408px;width:192px;height:18px;padding-top:1px;line-height:19px;background:#dce3ed;"></div><div class="c" style="left:902px;top:408px;width:130px;height:18px;padding-top:1px;line-height:19px;background:#dce3ed;"></div><div class="c" style="left:530px;top:428px;width:42px;height:17px;padding-top:1px;line-height:18px;background:#dce3ed;color:#333;">主</div><div class="c" style="left:573px;top:428px;width:91px;height:17px;padding-top:1px;line-height:18px;background:#dce3ed;color:#333;">让球</div><div class="c" style="left:665px;top:428px;width:43px;height:17px;padding-top:1px;line-height:18px;background:#dce3ed;color:#333;">客</div><div class="c" style="left:709px;top:428px;width:67px;height:17px;padding-top:1px;line-height:18px;background:#dce3ed;color:#333;">主</div><div class="c" style="left:777px;top:428px;width:54px;height:17px;padding-top:1px;line-height:18px;background:#dce3ed;color:#333;">和</div><div class="c" style="left:832px;top:428px;width:69px;height:17px;padding-top:1px;line-height:18px;background:#dce3ed;color:#333;">客</div><div class="c" style="left:902px;top:428px;width:36px;height:17px;padding-top:1px;line-height:18px;background:#dce3ed;color:#333;">胜负</div><div class="c" style="left:939px;top:428px;width:36px;height:17px;padding-top:1px;line-height:18px;background:#dce3ed;color:#333;">让球</div><div class="c" style="left:976px;top:428px;width:56px;height:17px;padding-top:1px;line-height:18px;background:#dce3ed;color:#333;">进球数</div><div class="sel" style="left:559px;top:408px;width:59px;height:17px"><span class="st">Crow*</span><svg style="position:absolute;left:44px;top:6px" width="11" height="7" viewBox="0 0 11 7"><path d="M1.2 1.2 L5.5 5.5 L9.8 1.2" fill="none" stroke="#000" stroke-width="1.9"/></svg></div><div class="sel" style="left:627px;top:408px;width:49px;height:17px"><span class="st">终指</span><svg style="position:absolute;left:34px;top:6px" width="11" height="7" viewBox="0 0 11 7"><path d="M1.2 1.2 L5.5 5.5 L9.8 1.2" fill="none" stroke="#000" stroke-width="1.9"/></svg></div><div class="sel" style="left:740px;top:408px;width:68px;height:17px"><span class="st">平均值</span><svg style="position:absolute;left:53px;top:6px" width="11" height="7" viewBox="0 0 11 7"><path d="M1.2 1.2 L5.5 5.5 L9.8 1.2" fill="none" stroke="#000" stroke-width="1.9"/></svg></div><div class="sel" style="left:818px;top:408px;width:49px;height:17px"><span class="st">终指</span><svg style="position:absolute;left:34px;top:6px" width="11" height="7" viewBox="0 0 11 7"><path d="M1.2 1.2 L5.5 5.5 L9.8 1.2" fill="none" stroke="#000" stroke-width="1.9"/></svg></div><div class="sel" style="left:941px;top:408px;width:49px;height:17px"><span class="st">全场</span><svg style="position:absolute;left:34px;top:6px" width="11" height="7" viewBox="0 0 11 7"><path d="M1.2 1.2 L5.5 5.5 L9.8 1.2" fill="none" stroke="#000" stroke-width="1.9"/></svg></div><div class="c w" style="left:5px;top:447px;width:81px;height:24px;padding-top:1px;line-height:25px;background:#0088ff">意甲</div><div class="a" style="left:5px;top:472px;width:81px;height:1px;background:#66b8ff;"></div><div class="a" style="left:86px;top:447px;width:1px;height:26px;background:#d9e9f9;"></div><div class="a" style="left:5px;top:446px;width:81px;height:1px;background:#e2e4e8;"></div><div class="c" style="left:87px;top:447px;width:73px;height:24px;padding-top:1px;line-height:25px;background:#ffffff;">24-12-30</div><div class="c" style="left:161px;top:447px;width:119px;height:24px;padding-top:1px;line-height:25px;background:#ffffff;"><span style="color:#1a7a1a">AC米兰</span></div><div class="c" style="left:281px;top:447px;width:86px;height:24px;padding-top:1px;line-height:25px;background:#ffffff;"><span style="color:#d81e1e">1-1</span>(1-1)</div><div class="c" style="left:368px;top:447px;width:35px;height:24px;padding-top:1px;line-height:25px;background:#ffffff;">6-5</div><div class="c" style="left:404px;top:447px;width:125px;height:24px;padding-top:1px;line-height:25px;background:#ffffff;">罗马</div><div class="c" style="left:530px;top:447px;width:42px;height:24px;padding-top:1px;line-height:25px;background:#fdf9f6;">0.98</div><div class="c" style="left:573px;top:447px;width:91px;height:24px;padding-top:1px;line-height:25px;background:#fdf9f6;">平/半</div><div class="c" style="left:665px;top:447px;width:43px;height:24px;padding-top:1px;line-height:25px;background:#fdf9f6;">0.91</div><div class="c" style="left:709px;top:447px;width:67px;height:24px;padding-top:1px;line-height:25px;background:#eef5fb;">2.34</div><div class="c" style="left:777px;top:447px;width:54px;height:24px;padding-top:1px;line-height:25px;background:#eef5fb;">3.16</div><div class="c" style="left:832px;top:447px;width:69px;height:24px;padding-top:1px;line-height:25px;background:#eef5fb;">3.23</div><div class="c" style="left:902px;top:447px;width:36px;height:24px;padding-top:1px;line-height:25px;background:#ffffff;color:#1a7a1a;">平</div><div class="c" style="left:939px;top:447px;width:36px;height:24px;padding-top:1px;line-height:25px;background:#ffffff;color:#2222c4;">输</div><div class="c" style="left:976px;top:447px;width:56px;height:24px;padding-top:1px;line-height:25px;background:#ffffff;color:#2222c4;">小</div><div class="c w" style="left:5px;top:473px;width:81px;height:24px;padding-top:1px;line-height:25px;background:#0088ff">意甲</div><div class="a" style="left:5px;top:498px;width:81px;height:1px;background:#66b8ff;"></div><div class="a" style="left:86px;top:473px;width:1px;height:26px;background:#d9e9f9;"></div><div class="c" style="left:87px;top:473px;width:73px;height:24px;padding-top:1px;line-height:25px;background:#efefef;">24-12-21</div><div class="c" style="left:161px;top:473px;width:119px;height:24px;padding-top:1px;line-height:25px;background:#efefef;">维罗纳</div><div class="c" style="left:281px;top:473px;width:86px;height:24px;padding-top:1px;line-height:25px;background:#efefef;"><span style="color:#d81e1e">0-1</span>(0-0)</div><div class="c" style="left:368px;top:473px;width:35px;height:24px;padding-top:1px;line-height:25px;background:#efefef;">3-8</div><div class="c" style="left:404px;top:473px;width:125px;height:24px;padding-top:1px;line-height:25px;background:#efefef;"><span style="color:#1a7a1a">AC米兰</span></div><div class="c" style="left:530px;top:473px;width:42px;height:24px;padding-top:1px;line-height:25px;background:#fdf9f6;">0.78</div><div class="c" style="left:573px;top:473px;width:91px;height:24px;padding-top:1px;line-height:25px;background:#fdf9f6;">受一球</div><div class="c" style="left:665px;top:473px;width:43px;height:24px;padding-top:1px;line-height:25px;background:#fdf9f6;">1.12</div><div class="c" style="left:709px;top:473px;width:67px;height:24px;padding-top:1px;line-height:25px;background:#eef5fb;">5.46</div><div class="c" style="left:777px;top:473px;width:54px;height:24px;padding-top:1px;line-height:25px;background:#eef5fb;">4.01</div><div class="c" style="left:832px;top:473px;width:69px;height:24px;padding-top:1px;line-height:25px;background:#eef5fb;">1.61</div><div class="c" style="left:902px;top:473px;width:36px;height:24px;padding-top:1px;line-height:25px;background:#efefef;color:#d81e1e;">胜</div><div class="c" style="left:939px;top:473px;width:36px;height:24px;padding-top:1px;line-height:25px;background:#efefef;color:#1a7a1a;">走</div><div class="c" style="left:976px;top:473px;width:56px;height:24px;padding-top:1px;line-height:25px;background:#efefef;color:#2222c4;">小</div><div class="c w" style="left:5px;top:499px;width:81px;height:24px;padding-top:1px;line-height:25px;background:#0088ff">意甲</div><div class="a" style="left:5px;top:524px;width:81px;height:1px;background:#66b8ff;"></div><div class="a" style="left:86px;top:499px;width:1px;height:26px;background:#d9e9f9;"></div><div class="c" style="left:87px;top:499px;width:73px;height:24px;padding-top:1px;line-height:25px;background:#ffffff;">24-12-16</div><div class="c" style="left:161px;top:499px;width:119px;height:24px;padding-top:1px;line-height:25px;background:#ffffff;"><span style="color:#1a7a1a">AC米兰</span></div><div class="c" style="left:281px;top:499px;width:86px;height:24px;padding-top:1px;line-height:25px;background:#ffffff;"><span style="color:#d81e1e">0-0</span>(0-0)</div><div class="c" style="left:368px;top:499px;width:35px;height:24px;padding-top:1px;line-height:25px;background:#ffffff;">9-2</div><div class="c" style="left:404px;top:499px;width:125px;height:24px;padding-top:1px;line-height:25px;background:#ffffff;">热那亚</div><div class="c" style="left:530px;top:499px;width:42px;height:24px;padding-top:1px;line-height:25px;background:#fdf9f6;">0.95</div><div class="c" style="left:573px;top:499px;width:91px;height:24px;padding-top:1px;line-height:25px;background:#fdf9f6;">一球</div><div class="c" style="left:665px;top:499px;width:43px;height:24px;padding-top:1px;line-height:25px;background:#fdf9f6;">0.94</div><div class="c" style="left:709px;top:499px;width:67px;height:24px;padding-top:1px;line-height:25px;background:#eef5fb;">1.51</div><div class="c" style="left:777px;top:499px;width:54px;height:24px;padding-top:1px;line-height:25px;background:#eef5fb;">4.22</div><div class="c" style="left:832px;top:499px;width:69px;height:24px;padding-top:1px;line-height:25px;background:#eef5fb;">6.55</div><div class="c" style="left:902px;top:499px;width:36px;height:24px;padding-top:1px;line-height:25px;background:#ffffff;color:#1a7a1a;">平</div><div class="c" style="left:939px;top:499px;width:36px;height:24px;padding-top:1px;line-height:25px;background:#ffffff;color:#2222c4;">输</div><div class="c" style="left:976px;top:499px;width:56px;height:24px;padding-top:1px;line-height:25px;background:#ffffff;color:#2222c4;">小</div><div class="c w" style="left:5px;top:525px;width:81px;height:24px;padding-top:1px;line-height:25px;background:#ff5500">欧冠杯</div><div class="a" style="left:5px;top:550px;width:81px;height:1px;background:#ff9966;"></div><div class="a" style="left:86px;top:525px;width:1px;height:26px;background:#d9e9f9;"></div><div class="c" style="left:87px;top:525px;width:73px;height:24px;padding-top:1px;line-height:25px;background:#efefef;">24-12-12</div><div class="c" style="left:161px;top:525px;width:119px;height:24px;padding-top:1px;line-height:25px;background:#efefef;"><span style="color:#1a7a1a">AC米兰</span></div><div class="c" style="left:281px;top:525px;width:86px;height:24px;padding-top:1px;line-height:25px;background:#efefef;"><span style="color:#d81e1e">2-1</span>(1-0)</div><div class="c" style="left:368px;top:525px;width:35px;height:24px;padding-top:1px;line-height:25px;background:#efefef;">6-4</div><div class="c" style="left:404px;top:525px;width:125px;height:24px;padding-top:1px;line-height:25px;background:#efefef;">贝尔格莱德红星</div><div class="c" style="left:530px;top:525px;width:42px;height:24px;padding-top:1px;line-height:25px;background:#fdf9f6;">1.09</div><div class="c" style="left:573px;top:525px;width:91px;height:24px;padding-top:1px;line-height:25px;background:#fdf9f6;">两球</div><div class="c" style="left:665px;top:525px;width:43px;height:24px;padding-top:1px;line-height:25px;background:#fdf9f6;">0.80</div><div class="c" style="left:709px;top:525px;width:67px;height:24px;padding-top:1px;line-height:25px;background:#eef5fb;">1.24</div><div class="c" style="left:777px;top:525px;width:54px;height:24px;padding-top:1px;line-height:25px;background:#eef5fb;">6.52</div><div class="c" style="left:832px;top:525px;width:69px;height:24px;padding-top:1px;line-height:25px;background:#eef5fb;">10.66</div><div class="c" style="left:902px;top:525px;width:36px;height:24px;padding-top:1px;line-height:25px;background:#efefef;color:#d81e1e;">胜</div><div class="c" style="left:939px;top:525px;width:36px;height:24px;padding-top:1px;line-height:25px;background:#efefef;color:#2222c4;">输</div><div class="c" style="left:976px;top:525px;width:56px;height:24px;padding-top:1px;line-height:25px;background:#efefef;color:#2222c4;">小</div><div class="c w" style="left:5px;top:551px;width:81px;height:24px;padding-top:1px;line-height:25px;background:#0088ff">意甲</div><div class="a" style="left:5px;top:576px;width:81px;height:1px;background:#66b8ff;"></div><div class="a" style="left:86px;top:551px;width:1px;height:26px;background:#d9e9f9;"></div><div class="c" style="left:87px;top:551px;width:73px;height:24px;padding-top:1px;line-height:25px;background:#ffffff;">24-12-07</div><div class="c" style="left:161px;top:551px;width:119px;height:24px;padding-top:1px;line-height:25px;background:#ffffff;">亚特兰大</div><div class="c" style="left:281px;top:551px;width:86px;height:24px;padding-top:1px;line-height:25px;background:#ffffff;"><span style="color:#d81e1e">2-1</span>(1-1)</div><div class="c" style="left:368px;top:551px;width:35px;height:24px;padding-top:1px;line-height:25px;background:#ffffff;">7-0</div><div class="c" style="left:404px;top:551px;width:125px;height:24px;padding-top:1px;line-height:25px;background:#ffffff;"><span style="color:#1a7a1a">AC米兰</span></div><div class="c" style="left:530px;top:551px;width:42px;height:24px;padding-top:1px;line-height:25px;background:#fdf9f6;">0.82</div><div class="c" style="left:573px;top:551px;width:91px;height:24px;padding-top:1px;line-height:25px;background:#fdf9f6;">平/半</div><div class="c" style="left:665px;top:551px;width:43px;height:24px;padding-top:1px;line-height:25px;background:#fdf9f6;">1.07</div><div class="c" style="left:709px;top:551px;width:67px;height:24px;padding-top:1px;line-height:25px;background:#eef5fb;">2.13</div><div class="c" style="left:777px;top:551px;width:54px;height:24px;padding-top:1px;line-height:25px;background:#eef5fb;">3.48</div><div class="c" style="left:832px;top:551px;width:69px;height:24px;padding-top:1px;line-height:25px;background:#eef5fb;">3.39</div><div class="c" style="left:902px;top:551px;width:36px;height:24px;padding-top:1px;line-height:25px;background:#ffffff;color:#2222c4;">负</div><div class="c" style="left:939px;top:551px;width:36px;height:24px;padding-top:1px;line-height:25px;background:#ffffff;color:#2222c4;">输</div><div class="c" style="left:976px;top:551px;width:56px;height:24px;padding-top:1px;line-height:25px;background:#ffffff;color:#d81e1e;">大</div><div class="c w" style="left:5px;top:577px;width:81px;height:24px;padding-top:1px;line-height:25px;background:#4433ee">意杯</div><div class="a" style="left:5px;top:602px;width:81px;height:1px;background:#8f85f5;"></div><div class="a" style="left:86px;top:577px;width:1px;height:26px;background:#d9e9f9;"></div><div class="c" style="left:87px;top:577px;width:73px;height:24px;padding-top:1px;line-height:25px;background:#efefef;">24-12-04</div><div class="c" style="left:161px;top:577px;width:119px;height:24px;padding-top:1px;line-height:25px;background:#efefef;"><span style="color:#1a7a1a">AC米兰</span></div><div class="c" style="left:281px;top:577px;width:86px;height:24px;padding-top:1px;line-height:25px;background:#efefef;"><span style="color:#d81e1e">6-1</span>(4-0)</div><div class="c" style="left:368px;top:577px;width:35px;height:24px;padding-top:1px;line-height:25px;background:#efefef;">7-0</div><div class="c" style="left:404px;top:577px;width:125px;height:24px;padding-top:1px;line-height:25px;background:#efefef;">萨索洛</div><div class="c" style="left:530px;top:577px;width:42px;height:24px;padding-top:1px;line-height:25px;background:#fdf9f6;">0.93</div><div class="c" style="left:573px;top:577px;width:91px;height:24px;padding-top:1px;line-height:25px;background:#fdf9f6;">球半</div><div class="c" style="left:665px;top:577px;width:43px;height:24px;padding-top:1px;line-height:25px;background:#fdf9f6;">0.96</div><div class="c" style="left:709px;top:577px;width:67px;height:24px;padding-top:1px;line-height:25px;background:#eef5fb;">1.29</div><div class="c" style="left:777px;top:577px;width:54px;height:24px;padding-top:1px;line-height:25px;background:#eef5fb;">5.57</div><div class="c" style="left:832px;top:577px;width:69px;height:24px;padding-top:1px;line-height:25px;background:#eef5fb;">9.09</div><div class="c" style="left:902px;top:577px;width:36px;height:24px;padding-top:1px;line-height:25px;background:#efefef;color:#d81e1e;">胜</div><div class="c" style="left:939px;top:577px;width:36px;height:24px;padding-top:1px;line-height:25px;background:#efefef;color:#d81e1e;">赢</div><div class="c" style="left:976px;top:577px;width:56px;height:24px;padding-top:1px;line-height:25px;background:#efefef;color:#d81e1e;">大</div><div class="c w" style="left:5px;top:603px;width:81px;height:24px;padding-top:1px;line-height:25px;background:#0088ff">意甲</div><div class="a" style="left:5px;top:628px;width:81px;height:1px;background:#66b8ff;"></div><div class="a" style="left:86px;top:603px;width:1px;height:26px;background:#d9e9f9;"></div><div class="c" style="left:87px;top:603px;width:73px;height:24px;padding-top:1px;line-height:25px;background:#ffffff;">24-12-01</div><div class="c" style="left:161px;top:603px;width:119px;height:24px;padding-top:1px;line-height:25px;background:#ffffff;"><span style="color:#1a7a1a">AC米兰</span></div><div class="c" style="left:281px;top:603px;width:86px;height:24px;padding-top:1px;line-height:25px;background:#ffffff;"><span style="color:#d81e1e">3-0</span>(2-0)</div><div class="c" style="left:368px;top:603px;width:35px;height:24px;padding-top:1px;line-height:25px;background:#ffffff;">7-3</div><div class="c" style="left:404px;top:603px;width:125px;height:24px;padding-top:1px;line-height:25px;background:#ffffff;">恩波利</div><div class="c" style="left:530px;top:603px;width:42px;height:24px;padding-top:1px;line-height:25px;background:#fdf9f6;">1.05</div><div class="c" style="left:573px;top:603px;width:91px;height:24px;padding-top:1px;line-height:25px;background:#fdf9f6;">球半</div><div class="c" style="left:665px;top:603px;width:43px;height:24px;padding-top:1px;line-height:25px;background:#fdf9f6;">0.84</div><div class="c" style="left:709px;top:603px;width:67px;height:24px;padding-top:1px;line-height:25px;background:#eef5fb;">1.32</div><div class="c" style="left:777px;top:603px;width:54px;height:24px;padding-top:1px;line-height:25px;background:#eef5fb;">5.07</div><div class="c" style="left:832px;top:603px;width:69px;height:24px;padding-top:1px;line-height:25px;background:#eef5fb;">9.62</div><div class="c" style="left:902px;top:603px;width:36px;height:24px;padding-top:1px;line-height:25px;background:#ffffff;color:#d81e1e;">胜</div><div class="c" style="left:939px;top:603px;width:36px;height:24px;padding-top:1px;line-height:25px;background:#ffffff;color:#d81e1e;">赢</div><div class="c" style="left:976px;top:603px;width:56px;height:24px;padding-top:1px;line-height:25px;background:#ffffff;color:#d81e1e;">大</div><div class="c w" style="left:5px;top:629px;width:81px;height:24px;padding-top:1px;line-height:25px;background:#ff5500">欧冠杯</div><div class="a" style="left:5px;top:654px;width:81px;height:1px;background:#ff9966;"></div><div class="a" style="left:86px;top:629px;width:1px;height:26px;background:#d9e9f9;"></div><div class="c" style="left:87px;top:629px;width:73px;height:24px;padding-top:1px;line-height:25px;background:#efefef;">24-11-27</div><div class="c" style="left:161px;top:629px;width:119px;height:24px;padding-top:1px;line-height:25px;background:#efefef;"><span class="rk">1</span>布拉迪斯拉发</div><div class="c" style="left:281px;top:629px;width:86px;height:24px;padding-top:1px;line-height:25px;background:#efefef;"><span style="color:#d81e1e">2-3</span>(1-1)</div><div class="c" style="left:368px;top:629px;width:35px;height:24px;padding-top:1px;line-height:25px;background:#efefef;">4-8</div><div class="c" style="left:404px;top:629px;width:125px;height:24px;padding-top:1px;line-height:25px;background:#efefef;"><span style="color:#1a7a1a">AC米兰</span></div><div class="c" style="left:530px;top:629px;width:42px;height:24px;padding-top:1px;line-height:25px;background:#fdf9f6;">0.92</div><div class="c" style="left:573px;top:629px;width:91px;height:24px;padding-top:1px;line-height:25px;background:#fdf9f6;">受球半/两</div><div class="c" style="left:665px;top:629px;width:43px;height:24px;padding-top:1px;line-height:25px;background:#fdf9f6;">0.97</div><div class="c" style="left:709px;top:629px;width:67px;height:24px;padding-top:1px;line-height:25px;background:#eef5fb;">12.64</div><div class="c" style="left:777px;top:629px;width:54px;height:24px;padding-top:1px;line-height:25px;background:#eef5fb;">6.70</div><div class="c" style="left:832px;top:629px;width:69px;height:24px;padding-top:1px;line-height:25px;background:#eef5fb;">1.22</div><div class="c" style="left:902px;top:629px;width:36px;height:24px;padding-top:1px;line-height:25px;background:#efefef;color:#d81e1e;">胜</div><div class="c" style="left:939px;top:629px;width:36px;height:24px;padding-top:1px;line-height:25px;background:#efefef;color:#2222c4;">输</div><div class="c" style="left:976px;top:629px;width:56px;height:24px;padding-top:1px;line-height:25px;background:#efefef;color:#d81e1e;">大</div><div class="c w" style="left:5px;top:655px;width:81px;height:24px;padding-top:1px;line-height:25px;background:#0088ff">意甲</div><div class="a" style="left:5px;top:680px;width:81px;height:1px;background:#66b8ff;"></div><div class="a" style="left:86px;top:655px;width:1px;height:26px;background:#d9e9f9;"></div><div class="c" style="left:87px;top:655px;width:73px;height:24px;padding-top:1px;line-height:25px;background:#ffffff;">24-11-24</div><div class="c" style="left:161px;top:655px;width:119px;height:24px;padding-top:1px;line-height:25px;background:#ffffff;"><span style="color:#1a7a1a">AC米兰</span></div><div class="c" style="left:281px;top:655px;width:86px;height:24px;padding-top:1px;line-height:25px;background:#ffffff;"><span style="color:#d81e1e">0-0</span>(0-0)</div><div class="c" style="left:368px;top:655px;width:35px;height:24px;padding-top:1px;line-height:25px;background:#ffffff;">2-4</div><div class="c" style="left:404px;top:655px;width:125px;height:24px;padding-top:1px;line-height:25px;background:#ffffff;">尤文图斯</div><div class="c" style="left:530px;top:655px;width:42px;height:24px;padding-top:1px;line-height:25px;background:#fdf9f6;">1.06</div><div class="c" style="left:573px;top:655px;width:91px;height:24px;padding-top:1px;line-height:25px;background:#fdf9f6;">平/半</div><div class="c" style="left:665px;top:655px;width:43px;height:24px;padding-top:1px;line-height:25px;background:#fdf9f6;">0.83</div><div class="c" style="left:709px;top:655px;width:67px;height:24px;padding-top:1px;line-height:25px;background:#eef5fb;">2.28</div><div class="c" style="left:777px;top:655px;width:54px;height:24px;padding-top:1px;line-height:25px;background:#eef5fb;">3.19</div><div class="c" style="left:832px;top:655px;width:69px;height:24px;padding-top:1px;line-height:25px;background:#eef5fb;">3.32</div><div class="c" style="left:902px;top:655px;width:36px;height:24px;padding-top:1px;line-height:25px;background:#ffffff;color:#1a7a1a;">平</div><div class="c" style="left:939px;top:655px;width:36px;height:24px;padding-top:1px;line-height:25px;background:#ffffff;color:#2222c4;">输</div><div class="c" style="left:976px;top:655px;width:56px;height:24px;padding-top:1px;line-height:25px;background:#ffffff;color:#2222c4;">小</div><div class="c w" style="left:5px;top:681px;width:81px;height:24px;padding-top:1px;line-height:25px;background:#0088ff">意甲</div><div class="a" style="left:5px;top:706px;width:81px;height:1px;background:#66b8ff;"></div><div class="a" style="left:86px;top:681px;width:1px;height:26px;background:#d9e9f9;"></div><div class="c" style="left:87px;top:681px;width:73px;height:24px;padding-top:1px;line-height:25px;background:#efefef;">24-11-10</div><div class="c" style="left:161px;top:681px;width:119px;height:24px;padding-top:1px;line-height:25px;background:#efefef;">卡利亚里</div><div class="c" style="left:281px;top:681px;width:86px;height:24px;padding-top:1px;line-height:25px;background:#efefef;"><span style="color:#d81e1e">3-3</span>(1-2)</div><div class="c" style="left:368px;top:681px;width:35px;height:24px;padding-top:1px;line-height:25px;background:#efefef;">6-3</div><div class="c" style="left:404px;top:681px;width:125px;height:24px;padding-top:1px;line-height:25px;background:#efefef;"><span style="color:#1a7a1a">AC米兰</span></div><div class="c" style="left:530px;top:681px;width:42px;height:24px;padding-top:1px;line-height:25px;background:#fdf9f6;">1.03</div><div class="c" style="left:573px;top:681px;width:91px;height:24px;padding-top:1px;line-height:25px;background:#fdf9f6;">受半/一</div><div class="c" style="left:665px;top:681px;width:43px;height:24px;padding-top:1px;line-height:25px;background:#fdf9f6;">0.86</div><div class="c" style="left:709px;top:681px;width:67px;height:24px;padding-top:1px;line-height:25px;background:#eef5fb;">4.99</div><div class="c" style="left:777px;top:681px;width:54px;height:24px;padding-top:1px;line-height:25px;background:#eef5fb;">4.03</div><div class="c" style="left:832px;top:681px;width:69px;height:24px;padding-top:1px;line-height:25px;background:#eef5fb;">1.65</div><div class="c" style="left:902px;top:681px;width:36px;height:24px;padding-top:1px;line-height:25px;background:#efefef;color:#1a7a1a;">平</div><div class="c" style="left:939px;top:681px;width:36px;height:24px;padding-top:1px;line-height:25px;background:#efefef;color:#2222c4;">输</div><div class="c" style="left:976px;top:681px;width:56px;height:24px;padding-top:1px;line-height:25px;background:#efefef;color:#d81e1e;">大</div><div class="c" style="left:6px;top:707px;width:1026px;height:24px;padding-top:1px;line-height:25px;background:#ffffff;word-spacing:2px;letter-spacing:0.1px">近<span style="color:#d81e1e">10</span>场,胜5平4负1, 胜率:<span style="color:#d81e1e">50%</span> 让胜率:<span style="color:#d81e1e">20%</span> 大率:<span style="color:#d81e1e">50%</span> 单率:<span style="color:#d81e1e">60%</span></div></body></html>
